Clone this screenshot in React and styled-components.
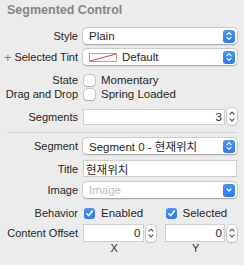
import React from "react";
import styled, { createGlobalStyle } from "styled-components";

const Global = createGlobalStyle`
  html, body { margin: 0; padding: 0; background: #ececec; }
  body { font-family: "Liberation Sans", "Noto Sans CJK KR", sans-serif; }
`;

const Panel = styled.div`
  width: 244px;
  height: 265px;
  background: #ececec;
  display: flex;
  flex-direction: column;
  padding-right: 7px;
  box-sizing: border-box;
  color: #262626;
  font-size: 11px;
`;

const Header = styled.div`
  height: 20px;
  display: flex;
  align-items: center;
  padding-left: 7px;
  font-weight: bold;
  font-size: 12.5px;
  color: #858585;
`;

const Row = styled.div`
  display: flex;
  align-items: center;
  height: ${(p) => p.$h}px;
  margin-top: ${(p) => p.$mt}px;
`;

const Label = styled.div`
  width: 78px;
  flex: none;
  margin-right: 5px;
  display: flex;
  align-items: center;
  justify-content: flex-end;
  padding-left: 4px;
  box-sizing: border-box;
  white-space: nowrap;
`;

const Plus = styled.span`
  margin-right: auto;
  color: #7d7d7d;
  font-size: 13px;
  font-weight: 300;
  line-height: 1;
`;

const Popup = styled.div`
  flex: 1;
  height: 16px;
  background: #fff;
  border-radius: 4px;
  box-shadow: 0 0 0 0.5px rgba(0, 0, 0, 0.18), 0 0.5px 1.5px rgba(0, 0, 0, 0.25);
  display: flex;
  align-items: center;
  padding: 0 2px 0 6px;
  box-sizing: border-box;
  font-size: 11.5px;
  color: ${(p) => (p.$placeholder ? "#bdbdbd" : "#262626")};
  white-space: nowrap;
`;

const PopupText = styled.span`
  flex: 1;
  overflow: hidden;
`;

const BlueButton = styled.div`
  width: 12px;
  height: 13px;
  border-radius: 3px;
  background: linear-gradient(#4c93f9, #2f78f2);
  display: flex;
  align-items: center;
  justify-content: center;
  flex: none;
`;

const Swatch = styled.svg`
  width: 28px;
  height: 9px;
  margin-right: 5px;
  flex: none;
`;

const Check = styled.div`
  width: 11px;
  height: 11px;
  box-sizing: border-box;
  border-radius: 3px;
  flex: none;
  margin-left: 1px;
  margin-right: 6px;
  background: ${(p) => (p.$on ? "linear-gradient(#4c93f9, #2f78f2)" : "#fff")};
  box-shadow: ${(p) =>
    p.$on ? "none" : "0 0 0 0.5px rgba(0,0,0,0.3), 0 0.5px 1px rgba(0,0,0,0.15)"};
  display: flex;
  align-items: center;
  justify-content: center;
`;

const CheckText = styled.span`
  font-size: 11.5px;
  white-space: nowrap;
`;

const Field = styled.div`
  flex: 1;
  height: ${(p) => p.$h || 16}px;
  background: #fff;
  box-shadow: inset 0 0 0 1px #cfcfcf, inset 0 1px 0 #bdbdbd;
  display: flex;
  align-items: center;
  justify-content: ${(p) => (p.$right ? "flex-end" : "flex-start")};
  padding: 0 3px;
  box-sizing: border-box;
  font-size: 11.5px;
`;

const Stepper = styled.div`
  width: 10px;
  height: 17px;
  margin-left: 2px;
  flex: none;
  background: #fff;
  border-radius: 4px;
  box-shadow: 0 0 0 0.5px rgba(0, 0, 0, 0.18), 0 0.5px 1.5px rgba(0, 0, 0, 0.25);
  display: flex;
  flex-direction: column;
  align-items: center;
  justify-content: space-around;
  padding: 2px 0;
  box-sizing: border-box;
`;

const Separator = styled.div`
  height: 1px;
  margin: 7px 0 0 7px;
  background: #d3d3d3;
`;

const Pair = styled.div`
  flex: 1;
  display: grid;
  grid-template-columns: 1fr 1fr;
  column-gap: 9px;
  height: 100%;
  align-items: center;
`;

const Cell = styled.div`
  display: flex;
  align-items: center;
  height: 100%;
`;

const Caption = styled.div`
  text-align: center;
  padding-right: 10px;
  font-size: 11px;
  color: #333;
`;

const UpDown = ({ color = "#fff", w = 6 }) => (
  <svg width={w} height="10" viewBox="0 0 6 10">
    <path d="M1 3.6 L3 1.6 L5 3.6" fill="none" stroke={color} strokeWidth="1.2" strokeLinecap="round" strokeLinejoin="round" />
    <path d="M1 6.4 L3 8.4 L5 6.4" fill="none" stroke={color} strokeWidth="1.2" strokeLinecap="round" strokeLinejoin="round" />
  </svg>
);

const Down = () => (
  <svg width="6" height="6" viewBox="0 0 6 6">
    <path d="M1 2 L3 4 L5 2" fill="none" stroke="#fff" strokeWidth="1.2" strokeLinecap="round" strokeLinejoin="round" />
  </svg>
);

const Chev = ({ up }) => (
  <svg width="6" height="4" viewBox="0 0 6 4">
    <path d={up ? "M1 3.2 L3 1 L5 3.2" : "M1 0.8 L3 3 L5 0.8"} fill="none" stroke="#4a4a4a" strokeWidth="1.1" strokeLinecap="round" strokeLinejoin="round" />
  </svg>
);

const Tick = () => (
  <svg width="9" height="9" viewBox="0 0 9 9">
    <path d="M1.8 4.8 L3.7 6.7 L7.3 2" fill="none" stroke="#fff" strokeWidth="1.6" strokeLinecap="round" strokeLinejoin="round" />
  </svg>
);

const StepperCtl = () => (
  <Stepper>
    <Chev up />
    <Chev />
  </Stepper>
);

export default function App() {
  return (
    <>
      <Global />
      <Panel>
        <Header>Segmented Control</Header>

        <Row $h={16} $mt={8}>
          <Label>Style</Label>
          <Popup>
            <PopupText>Plain</PopupText>
            <BlueButton><UpDown /></BlueButton>
          </Popup>
        </Row>

        <Row $h={16} $mt={5}>
          <Label><Plus>+</Plus>Selected Tint</Label>
          <Popup>
            <Swatch viewBox="0 0 28 9">
              <rect x="0.5" y="0.5" width="27" height="8" fill="#fff" stroke="#a8a8a8" />
              <line x1="1" y1="8" x2="27" y2="1" stroke="#f03a3a" strokeWidth="1" />
            </Swatch>
            <PopupText>Default</PopupText>
            <BlueButton><UpDown /></BlueButton>
          </Popup>
        </Row>

        <Row $h={14} $mt={8}>
          <Label>State</Label>
          <Check />
          <CheckText>Momentary</CheckText>
        </Row>

        <Row $h={14} $mt={0}>
          <Label>Drag and Drop</Label>
          <Check />
          <CheckText>Spring Loaded</CheckText>
        </Row>

        <Row $h={17} $mt={7}>
          <Label>Segments</Label>
          <Field $right>3</Field>
          <StepperCtl />
        </Row>

        <Separator />

        <Row $h={16} $mt={5}>
          <Label>Segment</Label>
          <Popup>
            <PopupText>Segment 0 - 현재위치</PopupText>
            <BlueButton><UpDown /></BlueButton>
          </Popup>
        </Row>

        <Row $h={17} $mt={6}>
          <Label>Title</Label>
          <Field $h={17}>현재위치</Field>
        </Row>

        <Row $h={16} $mt={5}>
          <Label>Image</Label>
          <Popup $placeholder>
            <PopupText>Image</PopupText>
            <BlueButton><Down /></BlueButton>
          </Popup>
        </Row>

        <Row $h={14} $mt={8}>
          <Label>Behavior</Label>
          <Pair>
            <Cell>
              <Check $on><Tick /></Check>
              <CheckText>Enabled</CheckText>
            </Cell>
            <Cell>
              <Check $on><Tick /></Check>
              <CheckText>Selected</CheckText>
            </Cell>
          </Pair>
        </Row>

        <Row $h={18} $mt={4}>
          <Label>Content Offset</Label>
          <Pair>
            <Cell>
              <Field $h={18} $right>0</Field>
              <StepperCtl />
            </Cell>
            <Cell>
              <Field $h={18} $right>0</Field>
              <StepperCtl />
            </Cell>
          </Pair>
        </Row>

        <Row $h={12} $mt={0}>
          <Label />
          <Pair>
            <Caption>X</Caption>
            <Caption>Y</Caption>
          </Pair>
        </Row>
      </Panel>
    </>
  );
}
